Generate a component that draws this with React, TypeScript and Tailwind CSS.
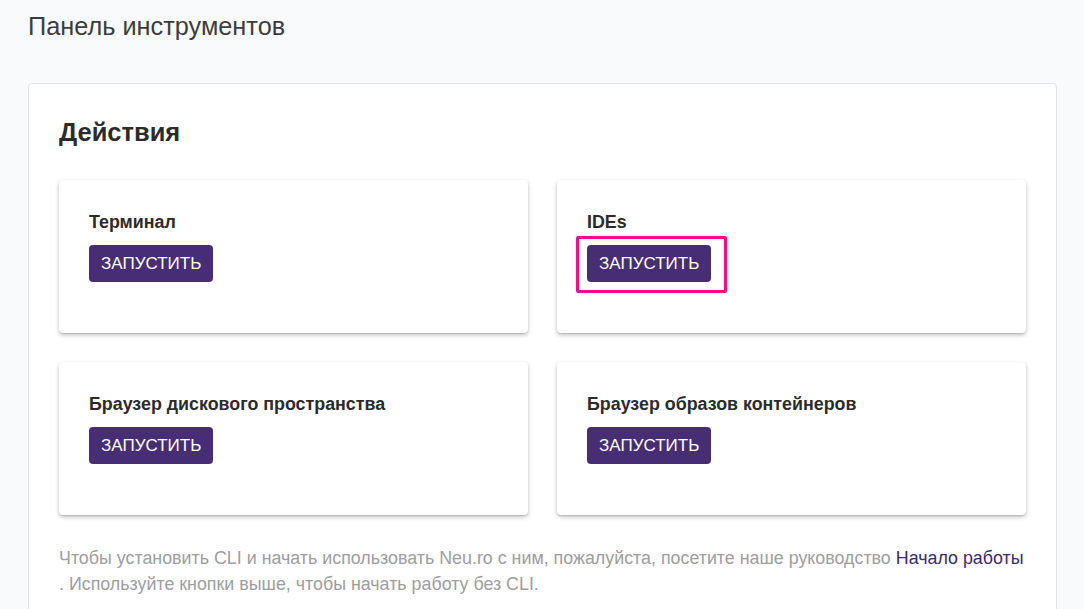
import type { ReactNode } from 'react';

const LaunchButton = ({ highlighted = false }: { highlighted?: boolean }) => (
    <div className="relative inline-block">
        <button className="h-[37px] rounded-[4px] bg-[#472e74] px-[12px] text-[17px] uppercase leading-none text-white">
            Запустить
        </button>
        {highlighted && (
            <span className="pointer-events-none absolute -top-[9px] -bottom-[11px] -left-[11px] -right-[16px] rounded-[2px] border-[3px] border-[#ff0a86]" />
        )}
    </div>
);

const ActionCard = ({ title, highlighted, children }: { title: string; highlighted?: boolean; children?: ReactNode }) => (
    <div className="h-[153px] rounded-[4px] bg-white px-[30px] pt-[29px] shadow-[0_2px_4px_rgba(0,0,0,0.25),0_1px_1px_rgba(0,0,0,0.1)]">
        <h3 className="text-[17.85px] font-bold leading-[26px] text-[#2b2b2b]">{title}</h3>
        <div className="mt-[10px]">
            <LaunchButton highlighted={highlighted} />
        </div>
        {children}
    </div>
);

export default function App() {
    return (
        <div className="min-h-screen bg-[#f9fafc] pl-[28px] pr-[27px] pt-[8px] font-['Liberation_Sans',Arial,sans-serif]">
            {/* Page title */}
            <h1 className="text-[25.3px] leading-[36px] text-[#3d3d3d]">Панель инструментов</h1>

            {/* Actions panel */}
            <div className="mt-[39px] rounded-[4px] border border-[#e3e3e3] bg-white px-[30px] pt-[32px] pb-[40px]">
                <h2 className="text-[25.5px] font-bold leading-[32px] text-[#2b2b2b]">Действия</h2>

                <div className="mt-[32px] grid grid-cols-2 gap-x-[29px] gap-y-[29px]">
                    <ActionCard title="Терминал" />
                    <ActionCard title="IDEs" highlighted />
                    <ActionCard title="Браузер дискового пространства" />
                    <ActionCard title="Браузер образов контейнеров" />
                </div>

                <p className="mt-[30px] text-[17.85px] leading-[26px] text-[#9e9e9e]">
                    Чтобы установить CLI и начать использовать Neu.ro с ним, пожалуйста, посетите наше руководство{' '}
                    <a href="#" className="whitespace-nowrap text-[#3d2a6e]">Начало работы</a> . Используйте кнопки выше, чтобы начать работу без CLI.
                </p>
            </div>
        </div>
    );
}
